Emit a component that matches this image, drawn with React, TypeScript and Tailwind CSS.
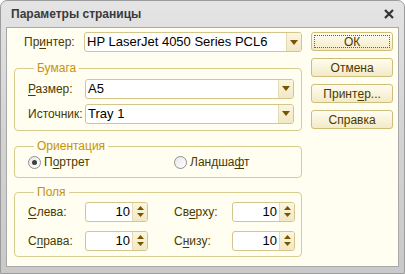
import React from "react";

const font = { fontFamily: '"Liberation Sans", Arial, sans-serif' };

function U({ children }: { children: React.ReactNode }) {
  return <span className="underline underline-offset-2">{children}</span>;
}

function Arrow() {
  return (
    <svg width="8" height="5" viewBox="0 0 8 5">
      <path d="M0 0H8L4 5Z" fill="#7a5500" />
    </svg>
  );
}

function Combo({ value, className }: { value: string; className?: string }) {
  return (
    <div
      className={`flex h-[20px] rounded-[3px] border border-[#d3c58c] bg-white overflow-hidden ${className ?? ""}`}
    >
      <div className="flex-1 pl-[2px] text-[13px] leading-[18px] text-black">{value}</div>
      <div className="w-[15px] flex items-center justify-center bg-gradient-to-b from-[#fbf6e0] to-[#f1e8c4] border-l border-[#e6dcb0]">
        <Arrow />
      </div>
    </div>
  );
}

function Spin({ value }: { value: string }) {
  return (
    <div className="flex w-[63px] h-[20px] rounded-[3px] border border-[#d3c58c] bg-white overflow-hidden">
      <div className="flex-1 pr-[2px] text-right text-[13px] leading-[18px] text-black">{value}</div>
      <div className="w-[15px] flex flex-col items-center justify-center gap-[3px] bg-gradient-to-b from-[#fbf6e0] to-[#f1e8c4] border-l border-[#e6dcb0]">
        <svg width="7" height="4" viewBox="0 0 7 4">
          <path d="M0 4H7L3.5 0Z" fill="#7a5500" />
        </svg>
        <svg width="7" height="4" viewBox="0 0 7 4">
          <path d="M0 0H7L3.5 4Z" fill="#7a5500" />
        </svg>
      </div>
    </div>
  );
}

function Btn({ children, focus }: { children: React.ReactNode; focus?: boolean }) {
  return (
    <div className="h-[19px] rounded-[3px] border border-[#cfbd7a] bg-gradient-to-b from-[#fffdf2] to-[#f3eac6] p-[2px]">
      <div
        className={`h-full flex items-center justify-center text-[12px] text-[#4a3a00] ${
          focus ? "border border-dotted border-[#6b6040]" : ""
        }`}
      >
        {children}
      </div>
    </div>
  );
}

function Radio({ checked }: { checked?: boolean }) {
  return (
    <div className="w-[13px] h-[13px] rounded-full border border-[#8f8f8f] bg-gradient-to-br from-[#e8e8e8] to-white flex items-center justify-center">
      {checked && <div className="w-[5px] h-[5px] rounded-full bg-[#3f3f3f]" />}
    </div>
  );
}

function Group({
  title,
  className,
  children,
}: {
  title: string;
  className?: string;
  children: React.ReactNode;
}) {
  return (
    <fieldset className={`rounded-[4px] border border-[#d8cc8e] ${className ?? ""}`}>
      <legend className="ml-[6px] px-[3px] text-[12px] leading-[14px] text-[#c7920c]">{title}</legend>
      {children}
    </fieldset>
  );
}

export default function App() {
  return (
    <div className="w-[405px] h-[274px] bg-white" style={font}>
      <div className="w-full h-full rounded-t-[7px] border border-[#9c9c9c] bg-gradient-to-b from-[#e4e4e4] via-[#d3d3d3] to-[#c9c9c9] flex flex-col">
        <div className="h-[26px] flex items-center justify-between pl-[10px] pr-[10px]">
          <span className="text-[12px] font-bold text-[#3a3a3a]">Параметры страницы</span>
          <svg width="10" height="10" viewBox="0 0 10 10">
            <path d="M1 1L9 9M9 1L1 9" stroke="#333" strokeWidth="2.2" />
          </svg>
        </div>
        <div className="mx-[5px] h-[240px] border border-[#a8a8a8] bg-[#fffef0] flex pt-[4px] pl-[7px] pr-[5px] text-[#4a3a00]">
          <div className="w-[289px] flex flex-col">
            <div className="flex items-center h-[20px]">
              <span className="w-[60px] pl-[10px] text-[12px] box-content">
                Пр<U>и</U>нтер:
              </span>
              <Combo value="HP LaserJet 4050 Series PCL6" className="flex-1" />
            </div>

            <Group title="Бумага" className="mt-[9px] pl-[13px] pr-[7px] pt-[4px] pb-[7px]">
              <div className="flex items-center h-[19px]">
                <span className="w-[57px] text-[12px]">
                  <U>Р</U>азмер:
                </span>
                <Combo value="A5" className="flex-1 h-[19px]" />
              </div>
              <div className="flex items-center h-[19px] mt-[6px]">
                <span className="w-[57px] text-[12px]">Источник:</span>
                <Combo value="Tray 1" className="flex-1 h-[19px]" />
              </div>
            </Group>

            <Group title="Ориентация" className="mt-[8px] pl-[13px] pt-[2px] pb-[8px]">
              <div className="flex items-center h-[14px] text-[12px]">
                <div className="w-[146px] flex items-center gap-[3px]">
                  <Radio checked />
                  <span>
                    П<U>о</U>ртрет
                  </span>
                </div>
                <div className="flex items-center gap-[3px]">
                  <Radio />
                  <span>
                    Ландша<U>ф</U>т
                  </span>
                </div>
              </div>
            </Group>

            <Group title="Поля" className="mt-[7px] pl-[13px] pt-[3px] pb-[6px]">
              <div className="flex items-center h-[19px] text-[12px]">
                <span className="w-[57px]">
                  <U>С</U>лева:
                </span>
                <Spin value="10" />
                <span className="ml-[26px] w-[58px]">
                  Св<U>е</U>рху:
                </span>
                <Spin value="10" />
              </div>
              <div className="flex items-center h-[19px] mt-[10px] text-[12px]">
                <span className="w-[57px]">
                  С<U>п</U>рава:
                </span>
                <Spin value="10" />
                <span className="ml-[26px] w-[58px]">
                  С<U>н</U>изу:
                </span>
                <Spin value="10" />
              </div>
            </Group>
          </div>

          <div className="ml-[9px] w-[82px] flex flex-col gap-[7px]">
            <Btn focus>ОК</Btn>
            <Btn>Отмена</Btn>
            <Btn>
              Принт<U>е</U>р...
            </Btn>
            <Btn>Справка</Btn>
          </div>
        </div>
      </div>
    </div>
  );
}
